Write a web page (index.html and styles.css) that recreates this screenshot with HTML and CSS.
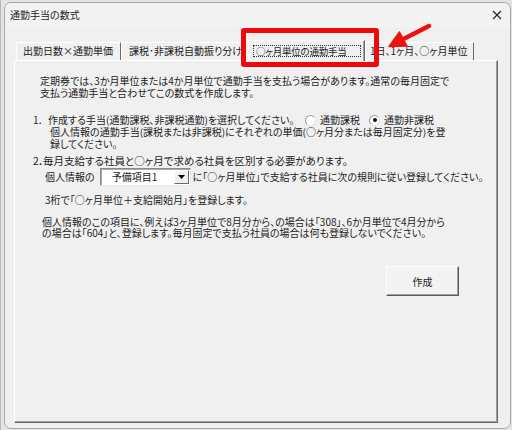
FILE: index.html
```html
<!DOCTYPE html>
<html lang="ja">
<head>
<meta charset="utf-8">
<title>通勤手当の数式</title>
<link rel="stylesheet" href="styles.css">
</head>
<body>
<div class="screen">
  <div class="window">
    <div class="titlebar">
      <span class="title">通勤手当の数式</span>
      <svg class="close" width="10" height="10" viewBox="0 0 10 10"><path d="M1 1L9 9M9 1L1 9" stroke="#222" stroke-width="1.1" fill="none"/></svg>
    </div>
    <div class="tabs">
      <div class="tab t1">出勤日数×通勤単価</div>
      <div class="tab t2">課税･非課税自動振り分け</div>
      <div class="tab t3"><span class="focus">○ヶ月単位の通勤手当</span></div>
      <div class="tab t4">1日、1ヶ月、○ヶ月単位</div>
    </div>
    <div class="panel">
      <p class="intro">定期券では、3か月単位または4か月単位で通勤手当を支払う場合があります。通常の毎月固定で<br>支払う通勤手当と合わせてこの数式を作成します。</p>

      <div class="item1">
        <div class="head-row">
          <span class="line"><span class="num1">1．</span>作成する手当(通勤課税、非課税通勤)を選択してください。</span>
          <span class="radio"><span class="dot"></span>通勤課税</span>
          <span class="radio checked"><span class="dot"></span>通勤非課税</span>
        </div>
        <p class="sub">個人情報の通勤手当(課税または非課税)にそれぞれの単価(○ヶ月分または毎月固定分)を登<br>録してください。</p>
      </div>

      <div class="item2">
        <p class="head2"><span class="num2">2．</span>毎月支給する社員と○ヶ月で求める社員を区別する必要があります。</p>
        <div class="combo-row">
          <span>個人情報の</span>
          <span class="combo"><span class="combo-text">予備項目1</span><span class="combo-btn"><svg width="7" height="4" viewBox="0 0 7 4"><path d="M0 0H7L3.5 4Z" fill="#000"/></svg></span></span>
          <span>に「○ヶ月単位」で支給する社員に次の規則に従い登録してください。</span>
        </div>
        <p class="rule">3桁で「○ヶ月単位＋支給開始月」を登録します。</p>
        <p class="example">個人情報のこの項目に、例えば3ヶ月単位で8月分から、の場合は「308」、6か月単位で4月分から<br>の場合は「604」と、登録します。毎月固定で支払う社員の場合は何も登録しないでください。</p>
      </div>

      <div class="actions">
        <button class="btn">作成</button>
      </div>
    </div>
  </div>
  <div class="highlight"></div>
  <svg class="arrow" width="512" height="80" viewBox="0 0 512 80">
    <line x1="428" y1="26" x2="401" y2="39.7" stroke="#ee1111" stroke-width="4.5" stroke-linecap="round"/>
    <polygon points="388,46.5 398.5,32 406,46" fill="#ee1111" stroke="#ee1111" stroke-width="1.5" stroke-linejoin="round"/>
  </svg>
</div>
</body>
</html>
```

FILE: styles.css
```css
* { box-sizing: border-box; }
html, body {
  margin: 0;
  padding: 0;
}
body {
  width: 512px;
  height: 430px;
  overflow: hidden;
  background: #e4e4e4;
  font-family: "Noto Sans CJK JP", "Noto Sans", sans-serif;
  font-feature-settings: "palt";
  color: #1c1c1c;
}
.screen {
  position: relative;
  width: 512px;
  height: 430px;
  padding: 2px 1px 1px 4px;
  border-left: 1px solid #b8b8b8;
}
.window {
  width: 507px;
  height: 427px;
  margin-left: -1px;
  background: #f0f0f0;
  border: 1px solid #a8a8a8;
  border-radius: 7px;
  display: flex;
  flex-direction: column;
}
.titlebar {
  height: 24px;
  padding: 0 8px 0 5px;
  display: flex;
  align-items: center;
  background: #f3f3f3;
  border-radius: 7px 7px 0 0;
}
.title {
  font-size: 10px;
  line-height: 24px;
}
.close {
  margin-left: auto;
}
.tabs {
  margin-top: 13px;
  margin-left: 11px;
  height: 20px;
  display: flex;
  align-items: flex-end;
  font-size: 10px;
  position: relative;
  z-index: 2;
}
.tab {
  height: 18px;
  line-height: 16px;
  white-space: nowrap;
  overflow: hidden;
  border-top: 1px solid #ffffff;
  border-left: 1px solid #ffffff;
  border-right: 1px solid #6a6a6a;
  background: #f0f0f0;
}
.t1 { width: 105px; padding-left: 6px; }
.t2 { width: 128px; padding-left: 7px; border-right: none; }
.t3 {
  width: 117px;
  height: 21px;
  margin-bottom: -1px;
  margin-left: -1px;
  padding: 4px 3px 0 4px;
  box-shadow: inset -1px 0 0 #a0a0a0;
}
.focus {
  display: block;
  height: 12px;
  line-height: 10px;
  border: 1px dotted #333;
  padding-left: 2px;
  font-size: 9.5px;
  letter-spacing: -0.25px;
  overflow: hidden;
}
.t4 { width: 109px; padding-left: 4px; }
.panel {
  margin-left: 9px;
  width: 484px;
  height: 363px;
  border-top: 1px solid #ffffff;
  border-left: 1px solid #ffffff;
  border-right: 1px solid #6a6a6a;
  border-bottom: 1px solid #6a6a6a;
  box-shadow: inset -1px -1px 0 #a0a0a0;
  padding: 14px 0 0 18px;
  font-size: 10px;
  line-height: 12px;
  white-space: nowrap;
}
p { margin: 0; }
.intro { padding-left: 7px; }
.item1 { margin-top: 15px; }
.num1 { display: inline-block; width: 15px; }
.num2 { display: inline-block; width: 10px; }
.head-row {
  display: grid;
  grid-template-columns: 272px 64px auto;
  align-items: center;
  height: 12px;
}
.radio {
  display: flex;
  align-items: center;
  gap: 4px;
}
.dot {
  width: 11px;
  height: 11px;
  border-radius: 50%;
  border: 1px solid;
  border-color: #9a9a9a #e6e6e6 #e6e6e6 #9a9a9a;
  background: #ffffff;
  position: relative;
}
.checked .dot::after {
  content: "";
  position: absolute;
  left: 2.5px;
  top: 2.5px;
  width: 4px;
  height: 4px;
  border-radius: 50%;
  background: #111;
}
.sub { padding-left: 17px; line-height: 11.5px; }
.item2 { margin-top: 6px; }
.head2 { font-size: 10.5px; }
.combo-row {
  margin-top: 1px;
  padding-left: 12px;
  display: flex;
  align-items: center;
  height: 18px;
}
.combo {
  margin: 0 2px 0 5px;
  width: 91px;
  height: 18px;
  background: #ffffff;
  border-top: 1px solid #8a8a8a;
  border-left: 1px solid #8a8a8a;
  border-right: 1px solid #e8e8e8;
  border-bottom: 1px solid #e8e8e8;
  box-shadow: inset 1px 1px 0 #a8a8a8;
  display: flex;
  align-items: center;
}
.combo-text { padding-left: 11px; flex: 1; }
.combo-btn {
  width: 15px;
  height: 14px;
  margin-right: 1px;
  background: #f0f0f0;
  border-top: 1px solid #ffffff;
  border-left: 1px solid #ffffff;
  border-right: 1px solid #6a6a6a;
  border-bottom: 1px solid #6a6a6a;
  display: flex;
  align-items: center;
  justify-content: center;
}
.rule { margin-top: 8px; padding-left: 12px; }
.example { margin-top: 10px; padding-left: 9px; line-height: 11px; }
.actions {
  margin-top: 28px;
  display: flex;
  justify-content: flex-end;
  padding-right: 38px;
}
.btn {
  width: 73px;
  height: 30px;
  font-family: inherit;
  font-size: 10px;
  color: #1c1c1c;
  background: #f3f3f3;
  border-top: 1px solid #ffffff;
  border-left: 1px solid #ffffff;
  border-right: 1px solid #5a5a5a;
  border-bottom: 1px solid #5a5a5a;
  box-shadow: inset -1px -1px 0 #a0a0a0;
  padding: 0;
}
.highlight {
  position: absolute;
  left: 240px;
  top: 28px;
  width: 138px;
  height: 39px;
  border: 5px solid #ee0a0a;
  border-radius: 3px;
  z-index: 5;
}
.arrow {
  position: absolute;
  left: 0;
  top: 0;
  z-index: 6;
}
```
